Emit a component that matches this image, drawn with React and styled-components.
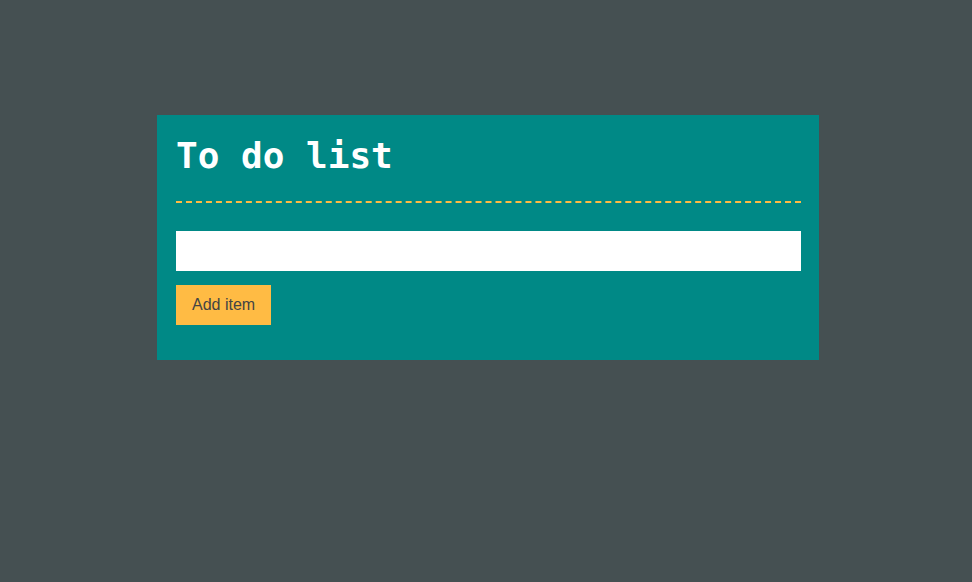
import React from 'react'
import styled, { createGlobalStyle } from 'styled-components'

const GlobalStyle = createGlobalStyle`
    html, body {
        margin: 0;
        padding: 0;
        background-color: #455052;
        font-family: "Liberation Sans", Arial, sans-serif;
    }
`

export const Page = styled.div`
    min-height: 582px;
    padding-top: 115px;
    box-sizing: border-box;
`

export const Card = styled.div`
    width: 662px;
    margin-left: 157px;
    background-color: #008986;
    padding: 19px 18px 35px 19px;
    box-sizing: border-box;
`

export const Heading = styled.h1`
    margin: 0;
    padding-bottom: 24px;
    border-bottom: 2px dashed #ffbb44;
    color: #fff;
    font-family: "DejaVu Sans Mono", monospace;
    font-weight: bold;
    font-size: 36px;
    line-height: 43px;
`

export const Form = styled.form`
    display: flex;
    flex-direction: column;
    align-items: flex-start;
    gap: 14px;
    margin-top: 28px;
`

export const TextInput = styled.input`
    width: 100%;
    height: 40px;
    box-sizing: border-box;
    border: none;
    outline: none;
    padding: 0 10px;
    font-size: 16px;
    font-family: "Liberation Sans", Arial, sans-serif;
`

export const AddButton = styled.button`
    height: 40px;
    padding: 0 16px;
    border: none;
    background-color: #ffbb44;
    color: #444;
    font-family: "Liberation Sans", Arial, sans-serif;
    font-size: 16px;
    cursor: pointer;
`

const App = () => {
    return (
        <>
            <GlobalStyle />
            <Page>
                <Card>
                    <Heading>To do list</Heading>
                    <Form onSubmit={e => e.preventDefault()}>
                        <TextInput type="text" />
                        <AddButton type="submit">Add item</AddButton>
                    </Form>
                </Card>
            </Page>
        </>
    )
}

export default App
